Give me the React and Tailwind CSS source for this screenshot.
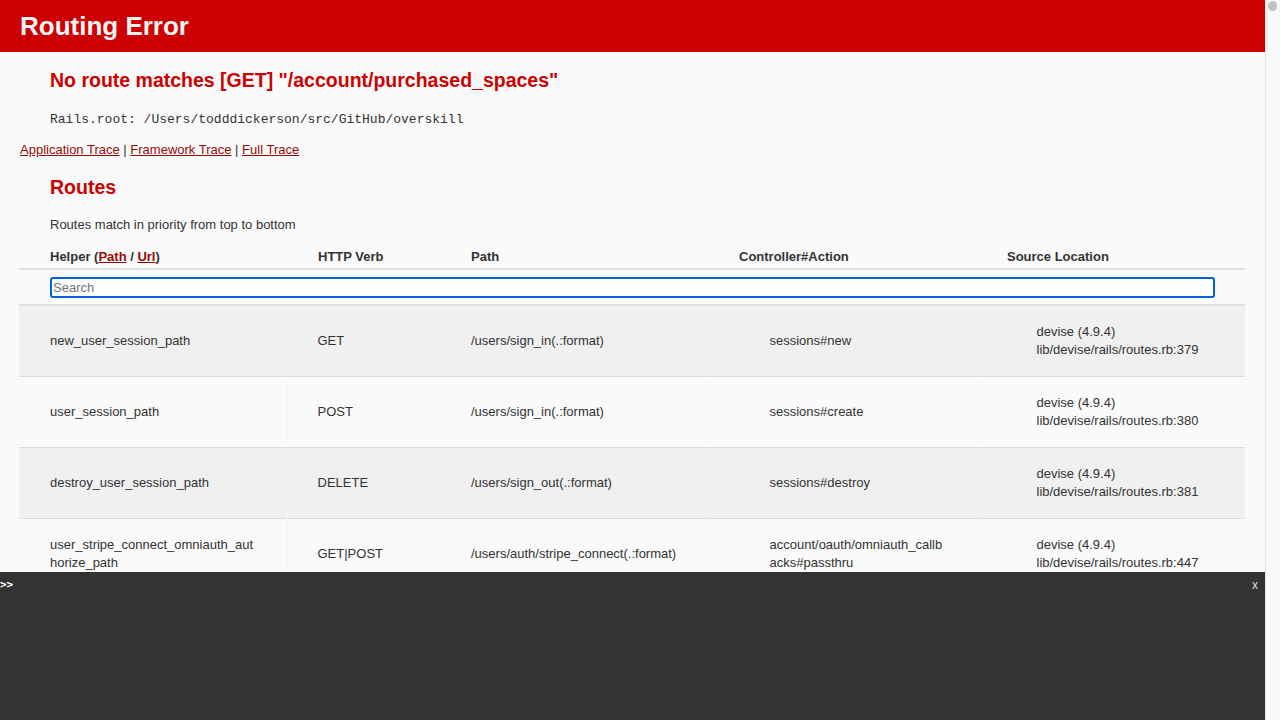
import React from 'react';

const routes = [
  {
    helper: ['new_user_session_path'],
    verb: 'GET',
    path: '/users/sign_in(.:format)',
    action: ['sessions#new'],
    source: ['devise (4.9.4)', 'lib/devise/rails/routes.rb:379'],
  },
  {
    helper: ['user_session_path'],
    verb: 'POST',
    path: '/users/sign_in(.:format)',
    action: ['sessions#create'],
    source: ['devise (4.9.4)', 'lib/devise/rails/routes.rb:380'],
  },
  {
    helper: ['destroy_user_session_path'],
    verb: 'DELETE',
    path: '/users/sign_out(.:format)',
    action: ['sessions#destroy'],
    source: ['devise (4.9.4)', 'lib/devise/rails/routes.rb:381'],
  },
  {
    helper: ['user_stripe_connect_omniauth_aut', 'horize_path'],
    verb: 'GET|POST',
    path: '/users/auth/stripe_connect(.:format)',
    action: ['account/oauth/omniauth_callb', 'acks#passthru'],
    source: ['devise (4.9.4)', 'lib/devise/rails/routes.rb:447'],
  },
  {
    helper: ['user_stripe_connect_omniauth_cal', 'lback_path'],
    verb: 'GET|POST',
    path: '/users/auth/stripe_connect/callback(.:format)',
    action: ['account/oauth/omniauth_callb', 'acks#stripe_connect'],
    source: ['devise (4.9.4)', 'lib/devise/rails/routes.rb:447'],
  },
];

const Lines = ({ items }) => (
  <>
    {items.map((t, i) => (
      <span key={i} className="block">
        {t}
      </span>
    ))}
  </>
);

export default function App() {
  return (
    <div
      className="flex h-[720px] w-full overflow-hidden bg-[#fafafa] text-[13px] text-[#333]"
      style={{ fontFamily: '"Liberation Sans", Helvetica, Arial, sans-serif' }}
    >
      <div className="relative flex-1 overflow-hidden">
        {/* Header */}
        <header className="flex h-[52px] items-center bg-[#cc0000] pl-[20px]">
          <h1 className="text-[26px] font-bold leading-[30px] text-[#f4f4f4]">Routing Error</h1>
        </header>

        <h2 className="mt-[16px] pl-[50px] text-[19.5px] font-bold leading-[25px] text-[#cc0000]">
          No route matches [GET] "/account/purchased_spaces"
        </h2>

        <p
          className="mt-[18px] pl-[50px] text-[13px] leading-[18px] text-[#333]"
          style={{ fontFamily: '"Liberation Mono", "DejaVu Sans Mono", monospace' }}
        >
          Rails.root: /Users/todddickerson/src/GitHub/overskill
        </p>

        <p className="mt-[12px] pl-[20px] leading-[18px]">
          <a href="#" className="text-[#980905] underline">Application Trace</a>
          {' | '}
          <a href="#" className="text-[#980905] underline">Framework Trace</a>
          {' | '}
          <a href="#" className="text-[#980905] underline">Full Trace</a>
        </p>

        <h2 className="mt-[16px] pl-[50px] text-[19.5px] font-bold leading-[25px] text-[#cc0000]">Routes</h2>

        <p className="mt-[16px] pl-[50px] leading-[18px]">Routes match in priority from top to bottom</p>

        {/* Route table */}
        <div className="mt-[12px] pl-[19px]">
          <table className="w-[1226px] table-fixed border-collapse text-left">
            <colgroup>
              <col className="w-[268px]" />
              <col className="w-[154px]" />
              <col className="w-[268px]" />
              <col className="w-[269px]" />
              <col className="w-[267px]" />
            </colgroup>
            <thead>
              <tr className="h-[23px] border-b-2 border-[#e0e0e0] align-middle">
                <th className="pl-[31px] font-bold leading-[18px]">
                  Helper (
                  <a href="#" className="text-[#980905] underline">Path</a>
                  {' / '}
                  <a href="#" className="text-[#980905] underline">Url</a>)
                </th>
                <th className="pl-[31px] font-bold">HTTP Verb</th>
                <th className="pl-[30px] font-bold">Path</th>
                <th className="pl-[30px] font-bold">Controller#Action</th>
                <th className="pl-[29px] font-bold">Source Location</th>
              </tr>
              <tr className="border-b-2 border-[#e0e0e0]">
                <th colSpan={5} className="pl-[31px] pr-[30px] pt-[7px] pb-[6px]">
                  <input
                    type="search"
                    placeholder="Search"
                    className="block h-[21px] w-full rounded-[3px] border-2 border-[#0060df] bg-white px-[1px] text-[13px] font-normal leading-[17px] text-[#333] outline-none placeholder:text-[#757575]"
                  />
                </th>
              </tr>
            </thead>
            <tbody>
              {routes.map((r, i) => (
                <tr
                  key={i}
                  className={`h-[71px] border-b border-[#dcdcdc] leading-[18px] ${i % 2 === 0 ? 'bg-[#f0f0f0]' : 'bg-[#fafafa]'}`}
                >
                  <td className="pl-[31px] pr-[20px] align-middle">
                    <Lines items={r.helper} />
                  </td>
                  <td className="border-l border-[#f4f4f4] pl-[30px] align-middle">{r.verb}</td>
                  <td className="pl-[30px] align-middle whitespace-nowrap">{r.path}</td>
                  <td className="border-l border-[#f4f4f4] pl-[60px] align-middle">
                    <Lines items={r.action} />
                  </td>
                  <td className="border-l border-[#f4f4f4] pl-[58px] align-middle">
                    <Lines items={r.source} />
                  </td>
                </tr>
              ))}
            </tbody>
          </table>
        </div>

        {/* Web console overlay */}
        <div className="absolute bottom-0 left-0 right-0 h-[148px] bg-[#333]">
          <div className="flex items-start justify-between pt-[6px]">
            <span
              className="text-[11px] font-bold leading-[14px] text-white"
              style={{ fontFamily: '"DejaVu Sans Mono", monospace' }}
            >
              &gt;&gt;
            </span>
            <span className="pr-[7px] text-[12px] leading-[14px] text-[#ddd]">x</span>
          </div>
        </div>
      </div>

      {/* Scrollbar */}
      <div className="w-[15px] shrink-0 border-l border-[#e6e6e6] bg-[#fafafa]">
        <div className="ml-[2px] mt-[1px] h-[10px] w-[9px] rounded-full bg-[#c1c1c1]" />
      </div>
    </div>
  );
}
